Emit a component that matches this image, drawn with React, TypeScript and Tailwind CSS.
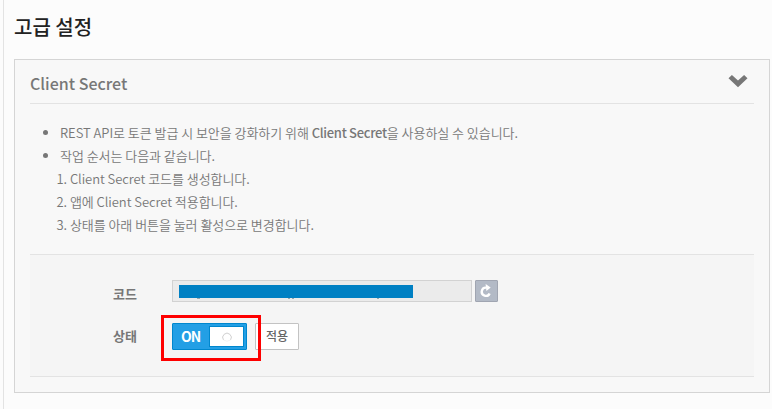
const steps = [
  "1. Client Secret 코드를 생성합니다.",
  "2. 앱에 Client Secret 적용합니다.",
  "3. 상태를 아래 버튼을 눌러 활성으로 변경합니다.",
];

function Header() {
  return (
    <header className="flex h-[44px] items-start justify-between border-b border-[#e3e3e3] pt-[11px]">
      <h2 className="text-[16px] leading-[25px] font-medium text-[#777]">
        <span>Client Secret</span>
      </h2>
      <svg className="mt-[4px] mr-[6px] h-[13px] w-[20px]" viewBox="0 0 20 13" fill="#777">
        <path d="M.5 3.2 3.9 0 10 5.6 16.1 0 19.5 3.2 10 12.3Z" />
      </svg>
    </header>
  );
}

function Notes() {
  return (
    <ul className="pt-[17px] text-[13px] leading-[23px] font-[350] tracking-[-0.05px] text-[#777]">
      <li className="flex h-[23px] items-center">
        <span className="mr-[12px] ml-[13px] size-[5px] rounded-full bg-[#777]" />
        <span className="whitespace-nowrap">
          REST API로 토큰 발급 시 보안을 강화하기 위해 <b className="font-medium tracking-[-0.3px]">Client Secret</b>을 사용하실 수 있습니다.
        </span>
      </li>
      <li className="flex h-[23px] items-center">
        <span className="mr-[12px] ml-[13px] size-[5px] rounded-full bg-[#777]" />
        <span className="whitespace-nowrap">작업 순서는 다음과 같습니다.</span>
      </li>
      {steps.map((s) => (
        <li key={s} className="h-[23px] pl-[26.5px]">
          <span className="whitespace-nowrap">{s}</span>
        </li>
      ))}
    </ul>
  );
}

function Toggle() {
  return (
    <button className="flex h-[27px] w-[75px] items-center justify-between rounded-[1px] border border-[#0087ce] bg-[#239fe5] pr-[2px] pl-[8px]">
      <span className="mt-[-2px] text-[14px] leading-[20px] font-bold tracking-[-1px] text-white">ON</span>
      <span className="flex h-[21px] w-[35px] items-center justify-center border border-[#0087ce] bg-white">
        <svg className="size-[10px]" viewBox="0 0 10 10" fill="none" stroke="#d0d0d0">
          <path d="M1.5 8A4.3 4.3 0 1 1 8.5 8" />
          <path d="M1.5 8Q5 10.5 8.5 8" stroke="#f3f3f3" />
        </svg>
      </span>
    </button>
  );
}

function Settings() {
  return (
    <div className="mt-[18px] h-[123px] border-y border-[#e3e3e3] bg-[#f5f5f5] pt-[25px]">
      <div className="flex h-[22px] items-center">
        <span className="mt-[6px] w-[142px] pl-[83px] text-[13px] font-bold text-[#777]">코드</span>
        <div className="flex h-[22px] w-[300px] border border-[#d2d2d2] bg-[#ebebeb]">
          <div className="mt-[4px] ml-[6px] flex h-[14px] w-[234px] flex-col">
            <div className="h-[13px] bg-[#0080c3]" />
            <div className="flex h-px">
              <i className="ml-[18px] h-px w-[3px] bg-[#9aa5ab]" />
              <i className="ml-[88px] h-px w-[2px] bg-[#9aa5ab]" />
              <i className="ml-[2px] h-px w-[2px] bg-[#9aa5ab]" />
              <i className="ml-[83px] h-px w-[2px] bg-[#9aa5ab]" />
            </div>
          </div>
        </div>
        <button className="ml-[3px] flex h-[22px] w-[23px] items-center justify-center rounded-[1px] border border-[#a0a5b1] bg-[#b3bac6]">
          <svg className="mr-[1px] size-[14px]" viewBox="0 0 14 14" fill="none">
            <path d="M7.2 3.6A4.1 4.1 0 1 0 10.6 9.4" stroke="white" strokeWidth="2.4" />
            <path d="M6.6 0 11.7 3.4 7.4 6.9Z" fill="white" />
          </svg>
        </button>
      </div>
      <div className="mt-[13px] flex h-[46px] items-center">
        <span className="mt-[-4px] w-[131px] pl-[83px] text-[13px] font-bold text-[#777]">상태</span>
        <div className="relative z-10 flex h-[46px] w-[100px] items-start border-[3px] border-[#fe0000] pt-[5px] pl-[8px]">
          <Toggle />
        </div>
        <button className="mt-[-4px] ml-[-6px] flex h-[27px] w-[44px] items-center justify-center rounded-[1px] border border-[#c3c3c3] bg-white text-[12px] font-medium text-[#666]">
          <span>적용</span>
        </button>
      </div>
    </div>
  );
}

export default function App() {
  return (
    <div className="h-[409px] w-[772px] overflow-hidden bg-[#fcfcfc] pl-[3px] font-['Noto_Sans_CJK_KR',sans-serif]">
      <main className="h-full border-l border-[#e3e3e3] pl-[10px]">
        <h1 className="h-[59px] pt-[12px] text-[20px] leading-[29px] font-medium text-[#222]">
          <span>고급 설정</span>
        </h1>
        <section className="h-[334px] w-[756px] border border-[#d5d5d5] bg-[#f8f8f8] px-[15px]">
          <Header />
          <Notes />
          <Settings />
        </section>
      </main>
    </div>
  );
}
